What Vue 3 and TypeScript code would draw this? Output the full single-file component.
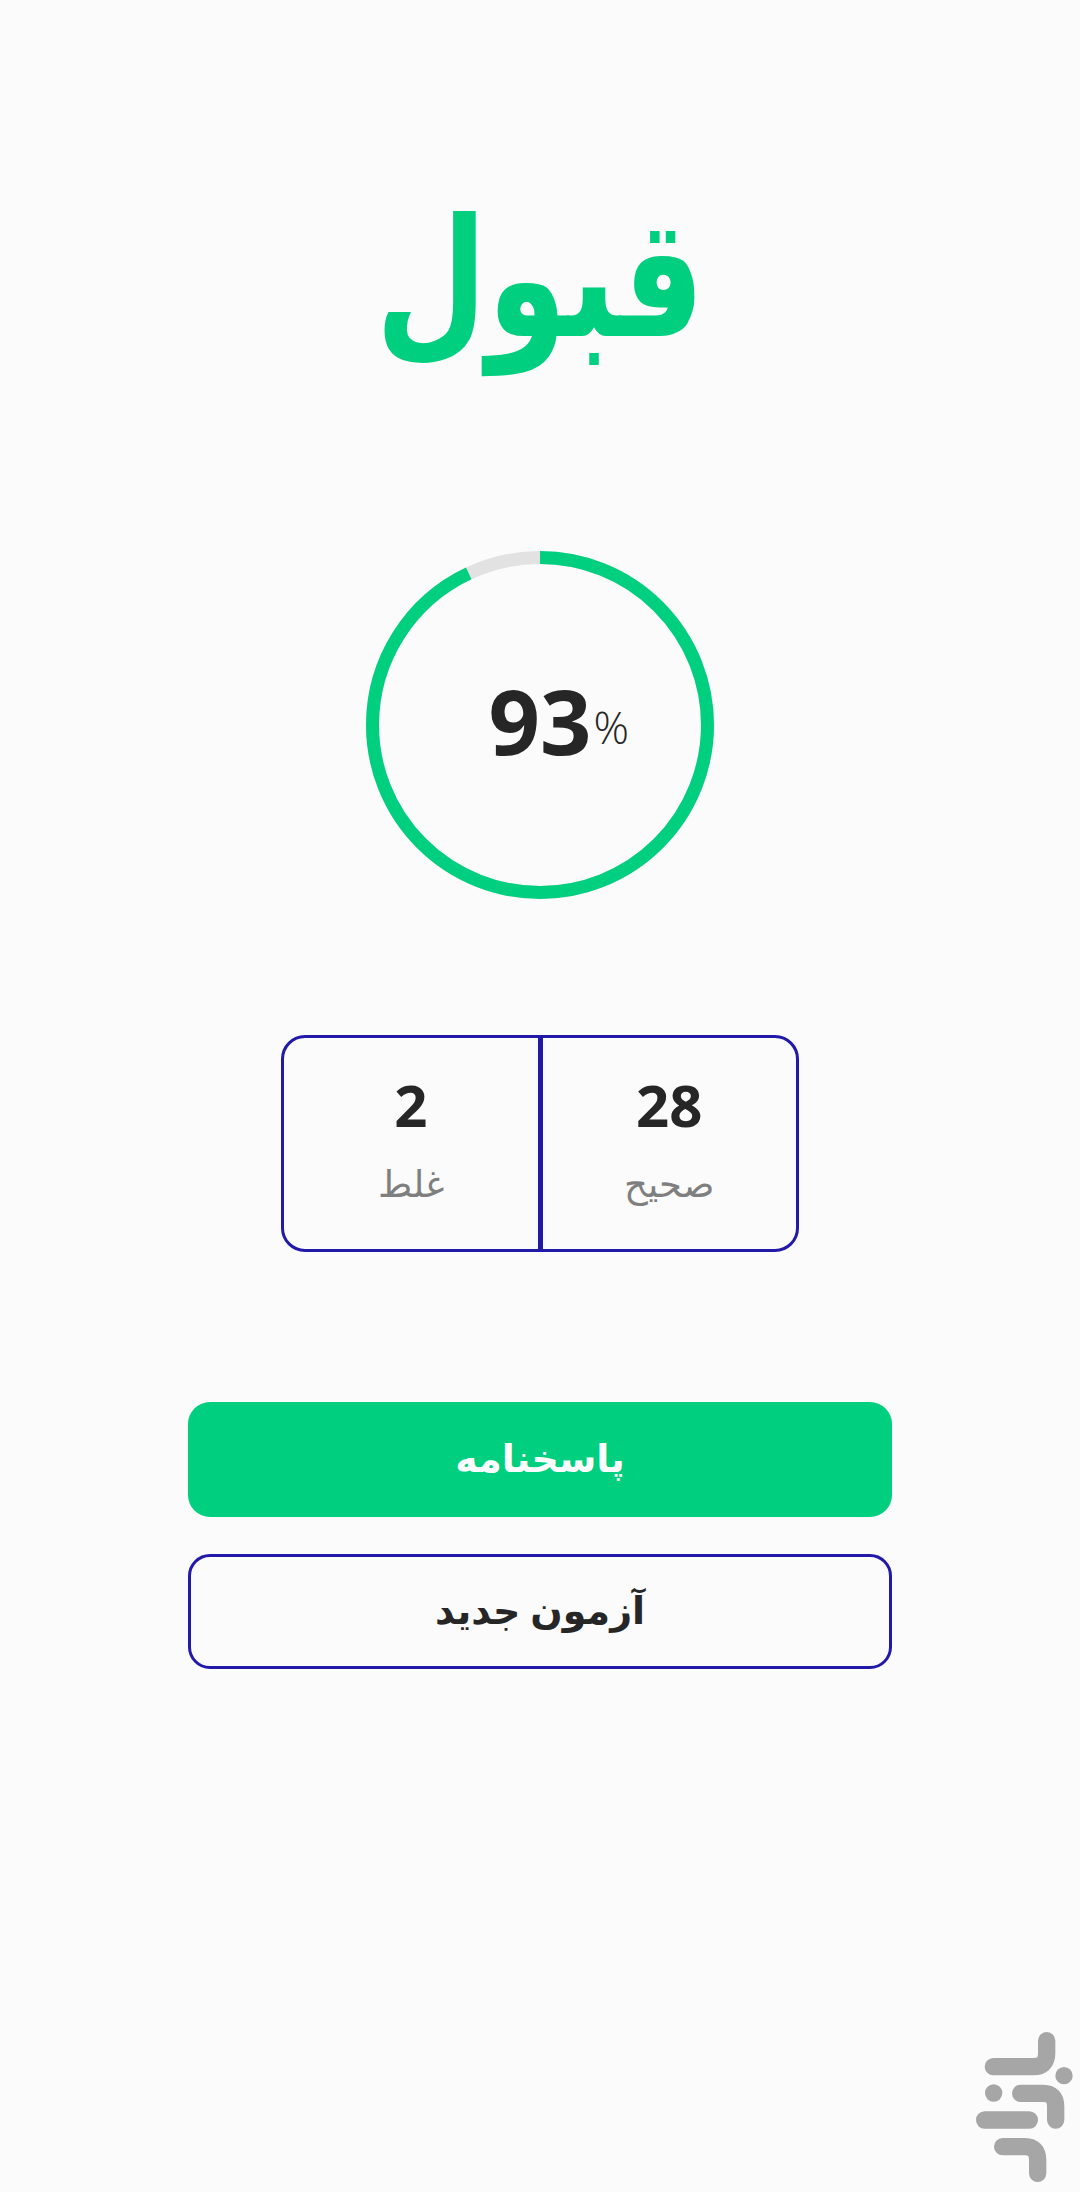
<template>
  <main class="result" dir="rtl">
    <h1 class="verdict">{{ verdict }}</h1>

    <div class="score">
      <svg class="ring" viewBox="0 0 348 348" aria-hidden="true">
        <circle class="ring-track" cx="174" cy="174" r="167.5" />
        <circle
          class="ring-value"
          cx="174"
          cy="174"
          r="167.5"
          pathLength="100"
          :stroke-dasharray="`${percent} 100`"
          transform="rotate(-90 174 174)"
        />
      </svg>
      <div class="score-number" dir="ltr">
        {{ percent }}<span class="score-unit">%</span>
      </div>
    </div>

    <section class="stats">
      <div v-for="stat in stats" :key="stat.label" class="stat">
        <span class="stat-value">{{ stat.value }}</span>
        <span class="stat-label">{{ stat.label }}</span>
      </div>
    </section>

    <div class="actions">
      <button class="btn btn--primary">پاسخنامه</button>
      <button class="btn btn--outline">آزمون جدید</button>
    </div>

    <svg class="watermark" viewBox="0 0 360 546" aria-hidden="true">
      <g fill="none" stroke="#a6a6a6" stroke-width="52" stroke-linecap="round">
        <path d="M260 92V130Q260 170 220 170H100" />
        <path d="M182 250H250Q287 250 287 290V330" />
        <path d="M74 330H208" />
        <path d="M128 410H195Q233 410 233 450V490" />
      </g>
      <circle cx="312" cy="197" r="26" fill="#a6a6a6" />
      <circle cx="101" cy="249" r="26" fill="#a6a6a6" />
    </svg>
  </main>
</template>

<script setup lang="ts">
interface Stat {
  label: string;
  value: number;
}

const verdict = 'قبول';
const percent = 93;
const stats: Stat[] = [
  { label: 'صحیح', value: 28 },
  { label: 'غلط', value: 2 },
];
</script>

<style>
html,
body {
  margin: 0;
  background: #fbfbfb;
}
</style>

<style scoped>
.result {
  position: relative;
  box-sizing: border-box;
  width: 1080px;
  height: 2192px;
  overflow: hidden;
  padding-top: 172px;
  display: flex;
  flex-direction: column;
  align-items: center;
  background: #fbfbfb;
  font-family: "Open Sans", "DejaVu Sans", sans-serif;
  color: #262626;
}

.verdict {
  margin: 0;
  height: 200px;
  line-height: 200px;
  font-size: 165px;
  font-weight: 700;
  color: #00cf80;
  transform: scaleX(0.78);
}

.score {
  position: relative;
  width: 348px;
  height: 348px;
  margin-top: 179px;
  display: flex;
  align-items: center;
  justify-content: center;
}

.ring {
  position: absolute;
  inset: 0;
  width: 348px;
  height: 348px;
}

.ring-track,
.ring-value {
  fill: none;
  stroke-width: 13;
}

.ring-track {
  stroke: #e2e2e2;
}

.ring-value {
  stroke: #00cf80;
}

.score-number {
  position: relative;
  top: -5px;
  font-size: 90px;
  font-weight: 700;
  line-height: 1;
}

.score-unit {
  position: absolute;
  left: 100%;
  bottom: 16px;
  margin-left: 2px;
  font-size: 44px;
  font-weight: 300;
  line-height: 1;
}

.stats {
  box-sizing: border-box;
  width: 518px;
  height: 217px;
  margin-top: 136px;
  display: flex;
  border: 3px solid #2219a8;
  border-radius: 24px;
}

.stat {
  flex: 1;
  display: flex;
  flex-direction: column;
  align-items: center;
  padding-top: 32px;
}

.stat + .stat {
  border-right: 5px solid #2219a8;
}

.stat-value {
  font-size: 58px;
  font-weight: 700;
  line-height: 70px;
}

.stat-label {
  margin-top: 15px;
  font-size: 37px;
  line-height: 56px;
  font-weight: 300;
  color: #7f7f7f;
}

.actions {
  width: 704px;
  margin-top: 150px;
  display: flex;
  flex-direction: column;
  gap: 37px;
}

.btn {
  box-sizing: border-box;
  width: 100%;
  font-family: inherit;
  font-size: 38px;
  font-weight: 700;
  border-radius: 22px;
  padding: 0 0 6px;
}

.btn--primary {
  height: 115px;
  border: none;
  background: #00cf80;
  color: #fff;
}

.btn--outline {
  height: 115px;
  border: 3px solid #2219a8;
  background: transparent;
  color: #262626;
}

.watermark {
  position: absolute;
  left: 960px;
  top: 2010px;
  width: 120px;
  height: 182px;
}
</style>
